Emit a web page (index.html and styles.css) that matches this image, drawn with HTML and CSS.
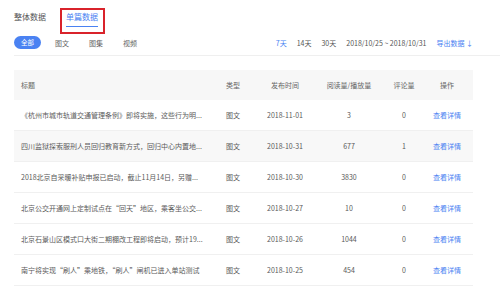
FILE: index.html
```html
<!DOCTYPE html>
<html lang="zh-CN">
  <head>
    <meta charset="UTF-8" />
    <title>单篇数据</title>
    <link rel="stylesheet" href="styles.css">
  </head>
  <body>
    <div class="page">
      <div class="tabs">
        <div class="tab">整体数据</div>
        <div class="tab active">
          <span>单篇数据</span>
        </div>
      </div>
      <div class="filters">
        <div class="kinds">
          <span class="pill">全部</span>
          <span>图文</span>
          <span>图集</span>
          <span>视频</span>
        </div>
        <div class="ranges">
          <span class="on">7天</span>
          <span>14天</span>
          <span>30天</span>
          <span>2018/10/25 ~ 2018/10/31</span>
          <span class="on">导出数据 ↓</span>
        </div>
      </div>
      <div class="divider"></div>
      <table class="list">
        <colgroup>
          <col style="width: 205px" />
          <col style="width: 40px" />
          <col style="width: 52px" />
          <col style="width: 76px" />
          <col style="width: 34px" />
          <col style="width: 52px" />
        </colgroup>
        <thead>
          <tr>
            <th>标题</th>
            <th>类型</th>
            <th class="c">发布时间</th>
            <th class="c">阅读量/播放量</th>
            <th class="c">评论量</th>
            <th class="c">操作</th>
          </tr>
        </thead>
        <tbody>
          <tr>
            <td>《杭州市城市轨道交通管理条例》即将实施，这些行为明...</td>
            <td>图文</td>
            <td class="c">2018-11-01</td>
            <td class="c">3</td>
            <td class="c">0</td>
            <td class="c"><a>查看详情</a></td>
          </tr>
          <tr class="hover">
            <td>四川监狱探索服刑人员回归教育新方式，回归中心内置地...</td>
            <td>图文</td>
            <td class="c">2018-10-31</td>
            <td class="c">677</td>
            <td class="c">1</td>
            <td class="c"><a>查看详情</a></td>
          </tr>
          <tr>
            <td>2018北京自采暖补贴申报已启动，截止11月14日，另赠...</td>
            <td>图文</td>
            <td class="c">2018-10-30</td>
            <td class="c">3830</td>
            <td class="c">0</td>
            <td class="c"><a>查看详情</a></td>
          </tr>
          <tr>
            <td>北京公交开通网上定制试点在“回天”地区，乘客坐公交...</td>
            <td>图文</td>
            <td class="c">2018-10-27</td>
            <td class="c">10</td>
            <td class="c">0</td>
            <td class="c"><a>查看详情</a></td>
          </tr>
          <tr>
            <td>北京石景山区模式口大街二期棚改工程即将启动，预计19...</td>
            <td>图文</td>
            <td class="c">2018-10-26</td>
            <td class="c">1044</td>
            <td class="c">0</td>
            <td class="c"><a>查看详情</a></td>
          </tr>
          <tr>
            <td>南宁将实现“刷人”乘地铁，“刷人”闸机已进入单站测试</td>
            <td>图文</td>
            <td class="c">2018-10-25</td>
            <td class="c">454</td>
            <td class="c">0</td>
            <td class="c"><a>查看详情</a></td>
          </tr>
        </tbody>
      </table>
    </div>
  </body>
</html>
```

FILE: styles.css
```css
* {
  box-sizing: border-box;
}
html,
body {
  margin: 0;
  background: #fff;
  font-family: "Noto Sans CJK SC", "Noto Sans", sans-serif;
  color: #666;
}
.page {
  width: 459px;
  margin-left: 14px;
  padding-top: 8px;
}
.tabs {
  display: flex;
  align-items: flex-start;
  gap: 14px;
  height: 28px;
}
.tab {
  font-size: 8px;
  line-height: 10px;
  color: #555;
  padding-top: 4px;
}
.tab.active {
  border: 2px solid #d9232b;
  padding: 2px 5px 4px 4px;
  height: 26px;
}
.tab.active span {
  display: block;
  color: #4a82f2;
  padding-bottom: 4px;
  border-bottom: 1.5px solid #4a82f2;
}
.filters {
  display: flex;
  justify-content: space-between;
  align-items: center;
  height: 13px;
  font-size: 7px;
  color: #666;
}
.kinds {
  display: flex;
  align-items: center;
  gap: 20px;
}
.kinds .pill {
  background: #4a82f2;
  color: #fff;
  width: 27px;
  height: 13px;
  line-height: 13px;
  border-radius: 7px;
  text-align: center;
  font-size: 6.5px;
  margin-right: -6px;
}
.ranges {
  display: flex;
  gap: 10px;
  color: #555;
}
.ranges .on {
  color: #4a82f2;
}
.divider {
  width: 486px;
  height: 1px;
  margin-top: 6px;
  background: #efefef;
}
.list {
  width: 459px;
  margin-top: 14px;
  border-collapse: separate;
  border-spacing: 0;
  table-layout: fixed;
  font-size: 7px;
}
.list th {
  background: #f7f7f7;
  height: 30px;
  font-weight: normal;
  color: #666;
  text-align: left;
  padding: 0 7px;
}
.list td {
  height: 31px;
  padding: 0 7px;
  color: #5a5a5a;
  border-bottom: 1px solid #f0f0f0;
  white-space: nowrap;
  overflow: hidden;
}
.list .c {
  text-align: center;
  padding: 0;
}
.list tr.hover td {
  background: #f8f8f8;
}
.list a {
  color: #4a82f2;
}
```
